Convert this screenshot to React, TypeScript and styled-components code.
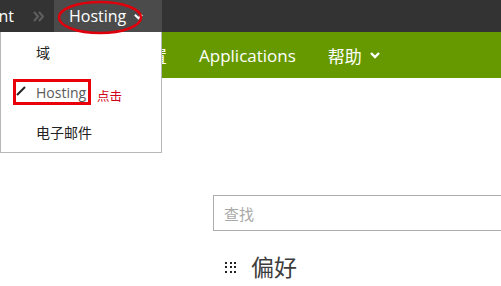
import React from "react";
import styled, { createGlobalStyle } from "styled-components";

const GlobalStyle = createGlobalStyle`
  html, body { margin: 0; padding: 0; background: #fff; }
  body {
    font-family: "Open Sans", "Noto Sans CJK SC", sans-serif;
    -webkit-font-smoothing: antialiased;
  }
`;

const Page = styled.div`
  position: relative;
  width: 501px;
  height: 286px;
  overflow: hidden;
  background: #fff;
`;

const TopBar = styled.div`
  display: flex;
  height: 32px;
  background: #333333;
  color: #fff;
  font-size: 16px;
`;

const ClippedCrumb = styled.div`
  width: 14px;
  display: flex;
  justify-content: flex-end;
  align-items: center;
  overflow: hidden;
  white-space: nowrap;
`;

const Separator = styled.div`
  width: 40px;
  display: flex;
  align-items: center;
  padding-left: 19px;
  box-sizing: border-box;
`;

const ActiveCrumb = styled.div`
  width: 108px;
  background: #4b4b4b;
  display: flex;
  align-items: center;
  padding-left: 15px;
  box-sizing: border-box;
  gap: 7px;
  white-space: nowrap;
`;

const NavBar = styled.nav`
  display: flex;
  align-items: center;
  height: 46px;
  background: #669900;
  padding-left: 133px;
  gap: 32px;
  color: #fff;
  font-size: 17px;
  white-space: nowrap;
`;

const NavItem = styled.span`
  display: inline-flex;
  align-items: center;
  gap: 7px;
`;

const Content = styled.main`
  padding: 117px 0 0 213px;
`;

const SearchBox = styled.div`
  width: 330px;
  height: 36px;
  box-sizing: border-box;
  border: 1px solid #acacac;
  display: flex;
  align-items: center;
  padding-left: 10px;
  color: #a8a8a8;
  font-size: 15px;
`;

const SectionTitle = styled.div`
  margin-top: 20px;
  display: flex;
  align-items: center;
  gap: 15px;
  padding-left: 12px;
  color: #3c3c3c;
  font-size: 23px;
  line-height: 32px;
`;

const DotGrid = styled.div`
  display: grid;
  grid-template-columns: repeat(3, 2px);
  grid-auto-rows: 2px;
  gap: 2.5px;
  span { background: #222; }
`;

const Dropdown = styled.ul`
  position: absolute;
  top: 32px;
  left: 0;
  width: 162px;
  margin: 0;
  padding: 0;
  list-style: none;
  box-sizing: border-box;
  background: #fff;
  border: 1px solid #b8b8b8;
  border-top: none;
`;

const DropItem = styled.li<{ $active?: boolean }>`
  position: relative;
  height: 40px;
  display: flex;
  align-items: center;
  padding-left: 35px;
  font-size: 14px;
  color: ${(p) => (p.$active ? "#5a5a5a" : "#222")};
`;

const Check = styled.svg`
  position: absolute;
  left: 15px;
  top: 14px;
`;

const Highlight = styled.div`
  position: absolute;
  left: 13px;
  top: 79px;
  width: 78px;
  height: 26px;
  box-sizing: border-box;
  border: 3px solid #e8000b;
`;

const ClickNote = styled.span`
  position: absolute;
  left: 97px;
  top: 86px;
  color: #d0021b;
  font-size: 12.5px;
`;

const Ellipse = styled.svg`
  position: absolute;
  left: 57px;
  top: 0;
`;

const Chevron = ({ size = 11, stroke = 2.2 }: { size?: number; stroke?: number }) => (
  <svg width={size} height={size} viewBox="0 0 12 12">
    <path d="M2 4 L6 8 L10 4" fill="none" stroke="#fff" strokeWidth={stroke} />
  </svg>
);

const DoubleChevron = () => (
  <svg width="11" height="11" viewBox="0 0 11 11">
    <path d="M1 1 L5 5.5 L1 10 M6 1 L10 5.5 L6 10" fill="none" stroke="#5e5e5e" strokeWidth="2.2" />
  </svg>
);

export default function App() {
  return (
    <>
      <GlobalStyle />
      <Page>
        <TopBar>
          <ClippedCrumb>Management</ClippedCrumb>
          <Separator>
            <DoubleChevron />
          </Separator>
          <ActiveCrumb>
            Hosting
            <Chevron />
          </ActiveCrumb>
        </TopBar>
        <NavBar>
          <NavItem>配置</NavItem>
          <NavItem>Applications</NavItem>
          <NavItem>
            帮助
            <Chevron size={12} stroke={2.4} />
          </NavItem>
        </NavBar>
        <Content>
          <SearchBox>查找</SearchBox>
          <SectionTitle>
            <DotGrid>
              {Array.from({ length: 9 }).map((_, i) => (
                <span key={i} />
              ))}
            </DotGrid>
            偏好
          </SectionTitle>
        </Content>

        <Dropdown>
          <DropItem>域</DropItem>
          <DropItem $active>
            <Check width="10" height="10" viewBox="0 0 10 10">
              <path d="M1 9 L9 1" stroke="#222" strokeWidth="2" />
            </Check>
            Hosting
          </DropItem>
          <DropItem>电子邮件</DropItem>
        </Dropdown>
        <Highlight />
        <ClickNote>点击</ClickNote>
        <Ellipse width="90" height="36" viewBox="0 0 90 36">
          <ellipse cx="43" cy="17.5" rx="41" ry="15.5" fill="none" stroke="#e0000b" strokeWidth="2.5" />
        </Ellipse>
      </Page>
    </>
  );
}
